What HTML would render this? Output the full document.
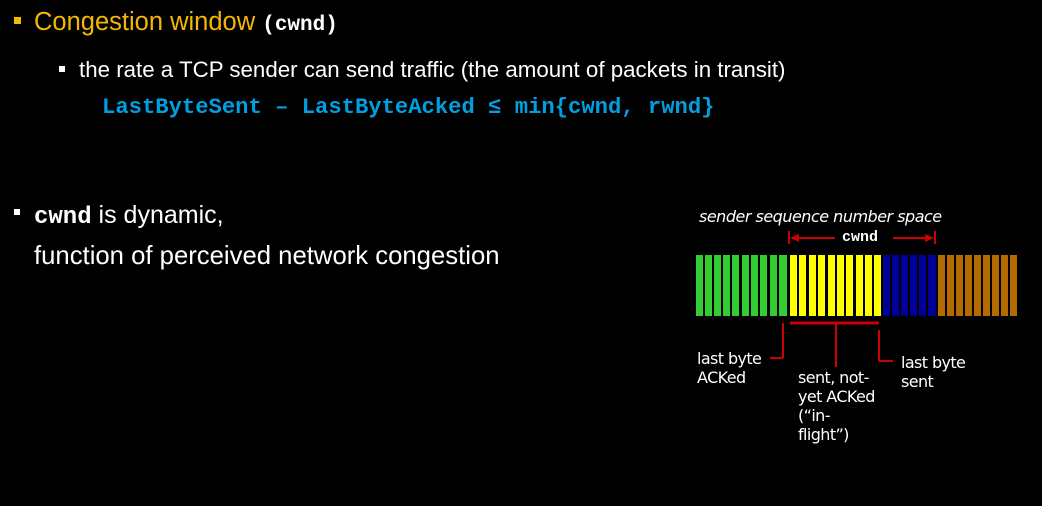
<html><head><style>
body{margin:0;width:1042px;height:506px;background:#000;overflow:hidden;font-family:"Liberation Sans",sans-serif;color:#fff;position:relative}
.t{position:absolute;white-space:nowrap}
.m{font-family:"Liberation Mono",monospace;font-weight:bold}
.b{position:absolute;background:#f5b800;width:7px;height:7px}
.w{position:absolute;background:#fff;width:6px;height:6px}
</style></head><body>
<div class="b" style="left:14px;top:17px"></div>
<div class="t" style="left:34px;top:8px;font-size:25.5px;color:#f5b800">Congestion window <span class="m" style="color:#fff;font-size:21px">(cwnd)</span></div>
<div class="w" style="left:59px;top:66px"></div>
<div class="t" style="left:79px;top:57px;font-size:22.3px">the rate a TCP sender can send traffic (the amount of packets in transit)</div>
<div class="t m" style="left:102px;top:95px;font-size:22.2px;color:#00a0e0">LastByteSent – LastByteAcked ≤ min{cwnd, rwnd}</div>
<div class="w" style="left:14px;top:209px"></div>
<div class="t" style="left:34px;top:201px;font-size:25px"><span class="m" style="font-size:24px">cwnd</span> is dynamic,</div>
<div class="t" style="left:34px;top:242px;font-size:25.7px">function of perceived network congestion</div>
<svg style="position:absolute;left:0;top:0" width="1042" height="506">
<g fill="#33cc33">
<rect x="696" y="255" width="7" height="61"/><rect x="705" y="255" width="7" height="61"/><rect x="714" y="255" width="7" height="61"/><rect x="723" y="255" width="7" height="61"/><rect x="732" y="255" width="7" height="61"/><rect x="742" y="255" width="7" height="61"/><rect x="751" y="255" width="7" height="61"/><rect x="760" y="255" width="7" height="61"/><rect x="770" y="255" width="7" height="61"/><rect x="779" y="255" width="8" height="61"/></g>
<g fill="#ffff00">
<rect x="790" y="255" width="7" height="61"/><rect x="799" y="255" width="7" height="61"/><rect x="809" y="255" width="7" height="61"/><rect x="818" y="255" width="7" height="61"/><rect x="828" y="255" width="7" height="61"/><rect x="837" y="255" width="7" height="61"/><rect x="846" y="255" width="7" height="61"/><rect x="856" y="255" width="7" height="61"/><rect x="865" y="255" width="7" height="61"/><rect x="874" y="255" width="7" height="61"/></g>
<g fill="#000099">
<rect x="883" y="255" width="7" height="61"/><rect x="892" y="255" width="7" height="61"/><rect x="901" y="255" width="7" height="61"/><rect x="910" y="255" width="7" height="61"/><rect x="919" y="255" width="7" height="61"/><rect x="928" y="255" width="8" height="61"/></g>
<g fill="#b36b00">
<rect x="938" y="255" width="7" height="61"/><rect x="947" y="255" width="7" height="61"/><rect x="956" y="255" width="7" height="61"/><rect x="965" y="255" width="7" height="61"/><rect x="974" y="255" width="7" height="61"/><rect x="983" y="255" width="7" height="61"/><rect x="992" y="255" width="7" height="61"/><rect x="1001" y="255" width="7" height="61"/><rect x="1010" y="255" width="7" height="61"/></g>
<g stroke="#cc0000" stroke-width="2" fill="none">
<line x1="789" y1="231" x2="789" y2="244"/><line x1="935" y1="231" x2="935" y2="244"/>
<line x1="792" y1="238" x2="835" y2="238"/><line x1="893" y1="238" x2="932" y2="238"/>
<line x1="783" y1="323" x2="783" y2="358"/><line x1="783" y1="358" x2="770" y2="358"/>
<line x1="836" y1="324" x2="836" y2="367"/>
<line x1="879" y1="330" x2="879" y2="361"/><line x1="879" y1="361" x2="893" y2="361"/>
</g>
<line x1="790" y1="323" x2="879" y2="323" stroke="#cc0000" stroke-width="3"/>
<polygon points="790,238 799,234 799,242" fill="#cc0000"/><polygon points="934,238 925,234 925,242" fill="#cc0000"/>
</svg>
<div class="t" style="left:699px;top:207px;font-size:16px;font-style:italic;font-family:'DejaVu Sans',sans-serif;letter-spacing:-0.5px">sender sequence number space</div>
<div class="t m" style="left:842px;top:229px;font-size:15px">cwnd</div>
<div class="t" style="left:697px;top:349px;font-size:16px;line-height:19px;font-family:'DejaVu Sans',sans-serif;letter-spacing:-0.6px">last byte<br>ACKed</div>
<div class="t" style="left:798px;top:368px;font-size:16px;line-height:19px;font-family:'DejaVu Sans',sans-serif;letter-spacing:-0.6px">sent, not-<br>yet ACKed<br>(“in-<br>flight”)</div>
<div class="t" style="left:901px;top:353px;font-size:16px;line-height:19px;font-family:'DejaVu Sans',sans-serif;letter-spacing:-0.6px">last byte<br>sent</div>
</body></html>
